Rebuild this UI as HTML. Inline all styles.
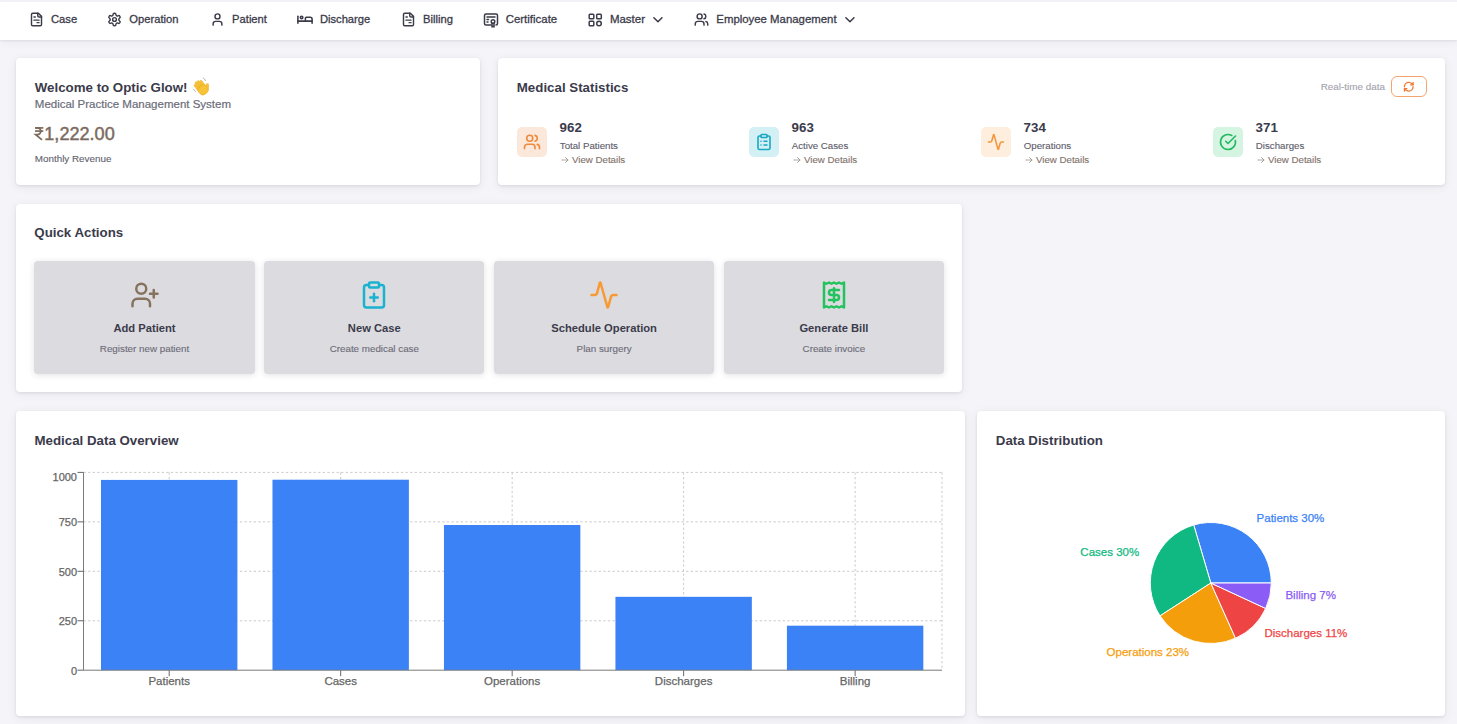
<!DOCTYPE html>
<html><head><meta charset="utf-8"><style>
html,body{margin:0;padding:0;width:1457px;height:724px;overflow:hidden;background:#f5f5f9;font-family:"Liberation Sans", sans-serif;}
.t{position:absolute;white-space:nowrap;line-height:1;}
svg{overflow:visible}
</style></head><body>
<div style="position:absolute;left:0px;top:2px;width:1457px;height:38px;background:#fff;box-shadow:0 1px 2px rgba(30,30,60,0.08),0 2px 8px rgba(30,30,60,0.06);"></div>
<svg style="position:absolute;left:29.1px;top:12.4px;" width="15" height="15" viewBox="0 0 24 24" fill="none"><g stroke="#3b3b4a" stroke-width="2.3" stroke-linecap="round" stroke-linejoin="round"><path d="M15 2H6a2 2 0 0 0-2 2v16a2 2 0 0 0 2 2h12a2 2 0 0 0 2-2V7Z"/><path d="M14 2v4a2 2 0 0 0 2 2h4"/><path d="M8 8h2"/><path d="M8 13h8"/><path d="M13 17h3"/></g></svg>
<div class="t" style="left:51.00px;top:14.32px;font-size:11.2px;font-weight:400;color:#3b3b4a;-webkit-text-stroke:0.3px #3b3b4a;">Case</div>
<svg style="position:absolute;left:107.4px;top:12.4px;" width="15" height="15" viewBox="0 0 24 24" fill="none"><g stroke="#3b3b4a" stroke-width="2.3" stroke-linecap="round" stroke-linejoin="round"><path d="M12.22 2h-.44a2 2 0 0 0-2 2v.18a2 2 0 0 1-1 1.73l-.43.25a2 2 0 0 1-2 0l-.15-.08a2 2 0 0 0-2.73.73l-.22.38a2 2 0 0 0 .73 2.73l.15.1a2 2 0 0 1 1 1.72v.51a2 2 0 0 1-1 1.74l-.15.09a2 2 0 0 0-.73 2.73l.22.38a2 2 0 0 0 2.73.73l.15-.08a2 2 0 0 1 2 0l.43.25a2 2 0 0 1 1 1.73V20a2 2 0 0 0 2 2h.44a2 2 0 0 0 2-2v-.18a2 2 0 0 1 1-1.73l.43-.25a2 2 0 0 1 2 0l.15.08a2 2 0 0 0 2.73-.73l.22-.39a2 2 0 0 0-.73-2.73l-.15-.08a2 2 0 0 1-1-1.74v-.5a2 2 0 0 1 1-1.74l.15-.09a2 2 0 0 0 .73-2.73l-.22-.38a2 2 0 0 0-2.73-.73l-.15.08a2 2 0 0 1-2 0l-.43-.25a2 2 0 0 1-1-1.73V4a2 2 0 0 0-2-2z"/><circle cx="12" cy="12" r="3"/></g></svg>
<div class="t" style="left:129.30px;top:14.32px;font-size:11.2px;font-weight:400;color:#3b3b4a;-webkit-text-stroke:0.3px #3b3b4a;">Operation</div>
<svg style="position:absolute;left:209.6px;top:12.4px;" width="15" height="15" viewBox="0 0 24 24" fill="none"><g stroke="#3b3b4a" stroke-width="2.3" stroke-linecap="round" stroke-linejoin="round"><circle cx="12" cy="7" r="4"/><path d="M19 21v-2a4 4 0 0 0-4-4H9a4 4 0 0 0-4 4v2"/></g></svg>
<div class="t" style="left:232.10px;top:14.32px;font-size:11.2px;font-weight:400;color:#3b3b4a;-webkit-text-stroke:0.3px #3b3b4a;">Patient</div>
<svg style="position:absolute;left:296px;top:14px;" width="18" height="12" viewBox="0 0 18 12" fill="none"><g stroke="#3b3b4a" stroke-width="1.55" stroke-linecap="round" stroke-linejoin="round" fill="none"><path d="M1.9 2.3v6.9"/><path d="M1.9 7.1h14.2v2.1"/><circle cx="5.6" cy="3.5" r="1.25"/><path d="M9.4 7.1V4.2a1 1 0 0 1 1-1h3.7a2 2 0 0 1 2 2v1.9"/></g></svg>
<div class="t" style="left:319.90px;top:14.32px;font-size:11.2px;font-weight:400;color:#3b3b4a;-webkit-text-stroke:0.3px #3b3b4a;">Discharge</div>
<svg style="position:absolute;left:400.6px;top:12.4px;" width="15" height="15" viewBox="0 0 24 24" fill="none"><g stroke="#3b3b4a" stroke-width="2.3" stroke-linecap="round" stroke-linejoin="round"><path d="M15 2H6a2 2 0 0 0-2 2v16a2 2 0 0 0 2 2h12a2 2 0 0 0 2-2V7Z"/><path d="M14 2v4a2 2 0 0 0 2 2h4"/><path d="M8 8h2"/><path d="M8 13h8"/><path d="M13 17h3"/></g></svg>
<div class="t" style="left:423.00px;top:14.32px;font-size:11.2px;font-weight:400;color:#3b3b4a;-webkit-text-stroke:0.3px #3b3b4a;">Billing</div>
<svg style="position:absolute;left:483px;top:13px;" width="17" height="15" viewBox="0 0 17 15" fill="none"><g stroke="#3b3b4a" stroke-width="1.5" stroke-linecap="round" stroke-linejoin="round" fill="none"><path d="M8 12H3a1.5 1.5 0 0 1-1.5-1.5V2.5A1.5 1.5 0 0 1 3 1h10a1.5 1.5 0 0 1 1.5 1.5v8A1.5 1.5 0 0 1 13 12"/><path d="M4 4h8"/><path d="M4 6.5h1.5"/><path d="M4 9h1"/><circle cx="10" cy="8.5" r="1.8"/><path d="M9 10.5v3.5l1-0.8 1 0.8v-3.5"/></g></svg>
<div class="t" style="left:505.70px;top:14.11px;font-size:11.45px;font-weight:400;color:#3b3b4a;-webkit-text-stroke:0.3px #3b3b4a;">Certificate</div>
<svg style="position:absolute;left:588px;top:13px;" width="15" height="14" viewBox="0 0 15 14" fill="none"><g stroke="#3b3b4a" stroke-width="1.5" fill="none"><rect x="1.2" y="1.2" width="4.6" height="4.6" rx="0.8"/><rect x="8.7" y="1.2" width="4.6" height="4.6" rx="0.8"/><rect x="1.2" y="8.2" width="4.6" height="4.6" rx="0.8"/><circle cx="11" cy="10.5" r="2.3"/></g></svg>
<div class="t" style="left:609.90px;top:14.07px;font-size:11.5px;font-weight:400;color:#3b3b4a;-webkit-text-stroke:0.3px #3b3b4a;">Master</div>
<svg style="position:absolute;left:651px;top:14px;" width="13" height="10" viewBox="0 0 13 10" fill="none"><path d="M2.9 3.7l4.05 4.1 4.05-4.1" stroke="#3b3b4a" stroke-width="1.5" fill="none" stroke-linecap="round" stroke-linejoin="round"/></svg>
<svg style="position:absolute;left:693.5px;top:12.2px;" width="15" height="15" viewBox="0 0 24 24" fill="none"><g stroke="#3b3b4a" stroke-width="2.3" stroke-linecap="round" stroke-linejoin="round"><path d="M16 21v-2a4 4 0 0 0-4-4H6a4 4 0 0 0-4 4v2"/><circle cx="9" cy="7" r="4"/><path d="M22 21v-2a4 4 0 0 0-3-3.87"/><path d="M16 3.13a4 4 0 0 1 0 7.75"/></g></svg>
<div class="t" style="left:716.30px;top:14.15px;font-size:11.4px;font-weight:400;color:#3b3b4a;-webkit-text-stroke:0.3px #3b3b4a;">Employee Management</div>
<svg style="position:absolute;left:843px;top:14px;" width="13" height="10" viewBox="0 0 13 10" fill="none"><path d="M2.9 3.7l4.05 4.1 4.05-4.1" stroke="#3b3b4a" stroke-width="1.5" fill="none" stroke-linecap="round" stroke-linejoin="round"/></svg>
<div style="position:absolute;left:16px;top:58px;width:464px;height:127px;background:#fff;border-radius:4px;box-shadow:0 1px 3px rgba(30,30,60,0.09),0 2px 10px rgba(30,30,60,0.08);"></div>
<div class="t" style="left:34.80px;top:80.84px;font-size:13.3px;font-weight:700;color:#3b3b4b;">Welcome to Optic Glow!</div>
<svg style="position:absolute;left:189px;top:75px;" width="24" height="24" viewBox="0 0 24 24" fill="none"><g transform="translate(12.6 13.2) rotate(-38)"><g fill="#f8c336" stroke="#e3a21a" stroke-width="0.35"><rect x="-4.6" y="-7.2" width="2.4" height="9" rx="1.2"/><rect x="-2.2" y="-8.6" width="2.4" height="10" rx="1.2"/><rect x="0.2" y="-8.3" width="2.4" height="10" rx="1.2"/><rect x="2.5" y="-6.8" width="2.3" height="9" rx="1.15"/><rect x="3.2" y="-1.2" width="2.6" height="7" rx="1.3" transform="rotate(40 4.5 3.5)"/><rect x="-4.7" y="-2.5" width="9.6" height="9.5" rx="4"/></g><path d="M-3.6 -2.5v2M-1.2 -3.2v2.2M1.3 -3.2v2.2" stroke="#e3a21a" stroke-width="0.4"/></g><path d="M14.5 3.2c1 .5 1.6 1.3 1.8 2.3" stroke="#a9b0b8" stroke-width="1" stroke-linecap="round" fill="none"/><path d="M4.6 14.2c.3 1 .9 1.8 1.9 2.3" stroke="#a9b0b8" stroke-width="1" stroke-linecap="round" fill="none"/></svg>
<div class="t" style="left:34.80px;top:98.97px;font-size:11.5px;font-weight:400;color:#6c6c79;-webkit-text-stroke:0.2px #6c6c79;">Medical Practice Management System</div>
<svg style="position:absolute;left:34.8px;top:127.3px;" width="8.5" height="13" viewBox="0 0 8.5 13" fill="none"><g stroke="#7b6a5e" stroke-width="1.7" fill="none" stroke-linecap="butt" stroke-linejoin="miter"><path d="M0 0.9h8.3"/><path d="M0 4.1h8.3"/><path d="M0.3 0.9h2.2a3.3 3.3 0 0 1 0 6.6H0.6l6.4 5.3"/></g></svg>
<div class="t" style="left:44.30px;top:125.28px;font-size:18.1px;font-weight:400;color:#7b6a5e;-webkit-text-stroke:0.45px #7b6a5e;">1,222.00</div>
<div class="t" style="left:34.80px;top:154.26px;font-size:9.85px;font-weight:400;color:#62626e;-webkit-text-stroke:0.12px #62626e;">Monthly Revenue</div>
<div style="position:absolute;left:498px;top:58px;width:947px;height:127px;background:#fff;border-radius:4px;box-shadow:0 1px 3px rgba(30,30,60,0.09),0 2px 10px rgba(30,30,60,0.08);"></div>
<div class="t" style="left:516.80px;top:80.94px;font-size:13.3px;font-weight:700;color:#3b3b4b;">Medical Statistics</div>
<div class="t" style="left:1320.70px;top:82.02px;font-size:9.9px;font-weight:400;color:#a3a3ad;-webkit-text-stroke:0.12px #a3a3ad;">Real-time data</div>
<div style="position:absolute;left:1391px;top:76px;width:36px;height:21px;box-sizing:border-box;border:1.5px solid #f4a56f;border-radius:6px;"></div>
<svg style="position:absolute;left:1403.2px;top:80.8px;" width="11.5" height="11.5" viewBox="0 0 24 24" fill="none"><g stroke="#ee7a36" stroke-width="2.8" stroke-linecap="round" stroke-linejoin="round"><path d="M3 12a9 9 0 0 1 9-9 9.75 9.75 0 0 1 6.74 2.74L21 8"/><path d="M21 3v5h-5"/><path d="M21 12a9 9 0 0 1-9 9 9.75 9.75 0 0 1-6.74-2.74L3 16"/><path d="M8 16H3v5"/></g></svg>
<div style="position:absolute;left:517px;top:126.6px;width:30px;height:30px;background:#fce8da;border-radius:5px;"></div>
<svg style="position:absolute;left:523px;top:132.6px;" width="18" height="18" viewBox="0 0 24 24" fill="none"><g stroke="#ef8a3c" stroke-width="2.15" stroke-linecap="round" stroke-linejoin="round"><path d="M16 21v-2a4 4 0 0 0-4-4H6a4 4 0 0 0-4 4v2"/><circle cx="9" cy="7" r="4"/><path d="M22 21v-2a4 4 0 0 0-3-3.87"/><path d="M16 3.13a4 4 0 0 1 0 7.75"/></g></svg>
<div class="t" style="left:559.60px;top:121.14px;font-size:13.3px;font-weight:700;color:#3b3b4b;">962</div>
<div class="t" style="left:559.80px;top:141.39px;font-size:9.7px;font-weight:400;color:#5d5d6a;-webkit-text-stroke:0.12px #5d5d6a;">Total Patients</div>
<svg style="position:absolute;left:560.5px;top:156.3px;" width="8" height="8" viewBox="0 0 8 8" fill="none"><path d="M1 4h6M4.5 1.5 7 4 4.5 6.5" stroke="#9a8f88" stroke-width="0.8" fill="none" stroke-linecap="round" stroke-linejoin="round"/></svg>
<div class="t" style="left:572.00px;top:155.19px;font-size:9.7px;font-weight:400;color:#7f726a;-webkit-text-stroke:0.12px #7f726a;">View Details</div>
<div style="position:absolute;left:749px;top:126.6px;width:30px;height:30px;background:#d3f0f5;border-radius:5px;"></div>
<svg style="position:absolute;left:755px;top:132.6px;" width="18" height="18" viewBox="0 0 24 24" fill="none"><g stroke="#1ba8c4" stroke-width="2.15" stroke-linecap="round" stroke-linejoin="round"><rect width="8" height="4" x="8" y="2" rx="1" ry="1"/><path d="M16 4h2a2 2 0 0 1 2 2v14a2 2 0 0 1-2 2H6a2 2 0 0 1-2-2V6a2 2 0 0 1 2-2h2"/><path d="M12 11h4"/><path d="M12 16h4"/><path d="M8 11h.01"/><path d="M8 16h.01"/></g></svg>
<div class="t" style="left:791.60px;top:121.14px;font-size:13.3px;font-weight:700;color:#3b3b4b;">963</div>
<div class="t" style="left:791.80px;top:141.39px;font-size:9.7px;font-weight:400;color:#5d5d6a;-webkit-text-stroke:0.12px #5d5d6a;">Active Cases</div>
<svg style="position:absolute;left:792.5px;top:156.3px;" width="8" height="8" viewBox="0 0 8 8" fill="none"><path d="M1 4h6M4.5 1.5 7 4 4.5 6.5" stroke="#9a8f88" stroke-width="0.8" fill="none" stroke-linecap="round" stroke-linejoin="round"/></svg>
<div class="t" style="left:804.00px;top:155.19px;font-size:9.7px;font-weight:400;color:#7f726a;-webkit-text-stroke:0.12px #7f726a;">View Details</div>
<div style="position:absolute;left:981px;top:126.6px;width:30px;height:30px;background:#fdeede;border-radius:5px;"></div>
<svg style="position:absolute;left:987px;top:132.6px;" width="18" height="18" viewBox="0 0 24 24" fill="none"><g stroke="#f5943a" stroke-width="2.15" stroke-linecap="round" stroke-linejoin="round"><path d="M22 12h-2.48a2 2 0 0 0-1.93 1.46l-2.35 8.36a.25.25 0 0 1-.48 0L9.24 2.18a.25.25 0 0 0-.48 0l-2.35 8.36A2 2 0 0 1 4.49 12H2"/></g></svg>
<div class="t" style="left:1023.60px;top:121.14px;font-size:13.3px;font-weight:700;color:#3b3b4b;">734</div>
<div class="t" style="left:1023.80px;top:141.39px;font-size:9.7px;font-weight:400;color:#5d5d6a;-webkit-text-stroke:0.12px #5d5d6a;">Operations</div>
<svg style="position:absolute;left:1024.5px;top:156.3px;" width="8" height="8" viewBox="0 0 8 8" fill="none"><path d="M1 4h6M4.5 1.5 7 4 4.5 6.5" stroke="#9a8f88" stroke-width="0.8" fill="none" stroke-linecap="round" stroke-linejoin="round"/></svg>
<div class="t" style="left:1036.00px;top:155.19px;font-size:9.7px;font-weight:400;color:#7f726a;-webkit-text-stroke:0.12px #7f726a;">View Details</div>
<div style="position:absolute;left:1213px;top:126.6px;width:30px;height:30px;background:#d6f4e2;border-radius:5px;"></div>
<svg style="position:absolute;left:1219px;top:132.6px;" width="18" height="18" viewBox="0 0 24 24" fill="none"><g stroke="#25b860" stroke-width="2.15" stroke-linecap="round" stroke-linejoin="round"><path d="M21.801 10A10 10 0 1 1 17 3.335"/><path d="m9 11 3 3L22 4"/></g></svg>
<div class="t" style="left:1255.60px;top:121.14px;font-size:13.3px;font-weight:700;color:#3b3b4b;">371</div>
<div class="t" style="left:1255.80px;top:141.39px;font-size:9.7px;font-weight:400;color:#5d5d6a;-webkit-text-stroke:0.12px #5d5d6a;">Discharges</div>
<svg style="position:absolute;left:1256.5px;top:156.3px;" width="8" height="8" viewBox="0 0 8 8" fill="none"><path d="M1 4h6M4.5 1.5 7 4 4.5 6.5" stroke="#9a8f88" stroke-width="0.8" fill="none" stroke-linecap="round" stroke-linejoin="round"/></svg>
<div class="t" style="left:1268.00px;top:155.19px;font-size:9.7px;font-weight:400;color:#7f726a;-webkit-text-stroke:0.12px #7f726a;">View Details</div>
<div style="position:absolute;left:16px;top:204px;width:946px;height:188px;background:#fff;border-radius:4px;box-shadow:0 1px 3px rgba(30,30,60,0.09),0 2px 10px rgba(30,30,60,0.08);"></div>
<div class="t" style="left:34.30px;top:226.24px;font-size:13.3px;font-weight:700;color:#3b3b4b;">Quick Actions</div>
<div style="position:absolute;left:34.3px;top:261px;width:220.4px;height:112.5px;background:#dcdbe0;border-radius:4px;box-shadow:0 1px 6px rgba(30,30,60,0.13);"></div>
<svg style="position:absolute;left:129.5px;top:279.6px;" width="30" height="30" viewBox="0 0 24 24" fill="none"><g stroke="#85725f" stroke-width="2" stroke-linecap="round" stroke-linejoin="round"><path d="M16 21v-2a4 4 0 0 0-4-4H6a4 4 0 0 0-4 4v2"/><circle cx="9" cy="7" r="4"/><line x1="19" x2="19" y1="8" y2="14"/><line x1="22" x2="16" y1="11" y2="11"/></g></svg>
<div class="t" style="left:-155.50px;width:600px;text-align:center;top:322.82px;font-size:11.2px;font-weight:700;color:#3b3b4b;">Add Patient</div>
<div class="t" style="left:-155.50px;width:600px;text-align:center;top:344.10px;font-size:9.8px;font-weight:400;color:#6c6c78;-webkit-text-stroke:0.12px #6c6c78;">Register new patient</div>
<div style="position:absolute;left:264.1px;top:261px;width:220.4px;height:112.5px;background:#dcdbe0;border-radius:4px;box-shadow:0 1px 6px rgba(30,30,60,0.13);"></div>
<svg style="position:absolute;left:359.3px;top:279.6px;" width="30" height="30" viewBox="0 0 24 24" fill="none"><g stroke="#1ab3cf" stroke-width="2" stroke-linecap="round" stroke-linejoin="round"><rect width="8" height="4" x="8" y="2" rx="1" ry="1"/><path d="M16 4h2a2 2 0 0 1 2 2v14a2 2 0 0 1-2 2H6a2 2 0 0 1-2-2V6a2 2 0 0 1 2-2h2"/><path d="M9 14h6"/><path d="M12 17v-6"/></g></svg>
<div class="t" style="left:74.30px;width:600px;text-align:center;top:322.82px;font-size:11.2px;font-weight:700;color:#3b3b4b;">New Case</div>
<div class="t" style="left:74.30px;width:600px;text-align:center;top:344.10px;font-size:9.8px;font-weight:400;color:#6c6c78;-webkit-text-stroke:0.12px #6c6c78;">Create medical case</div>
<div style="position:absolute;left:493.90000000000003px;top:261px;width:220.4px;height:112.5px;background:#dcdbe0;border-radius:4px;box-shadow:0 1px 6px rgba(30,30,60,0.13);"></div>
<svg style="position:absolute;left:589.1px;top:279.6px;" width="30" height="30" viewBox="0 0 24 24" fill="none"><g stroke="#f89a33" stroke-width="2" stroke-linecap="round" stroke-linejoin="round"><path d="M22 12h-2.48a2 2 0 0 0-1.93 1.46l-2.35 8.36a.25.25 0 0 1-.48 0L9.24 2.18a.25.25 0 0 0-.48 0l-2.35 8.36A2 2 0 0 1 4.49 12H2"/></g></svg>
<div class="t" style="left:304.10px;width:600px;text-align:center;top:322.82px;font-size:11.2px;font-weight:700;color:#3b3b4b;">Schedule Operation</div>
<div class="t" style="left:304.10px;width:600px;text-align:center;top:344.10px;font-size:9.8px;font-weight:400;color:#6c6c78;-webkit-text-stroke:0.12px #6c6c78;">Plan surgery</div>
<div style="position:absolute;left:723.7px;top:261px;width:220.4px;height:112.5px;background:#dcdbe0;border-radius:4px;box-shadow:0 1px 6px rgba(30,30,60,0.13);"></div>
<svg style="position:absolute;left:818.9000000000001px;top:279.6px;" width="30" height="30" viewBox="0 0 24 24" fill="none"><g stroke="#22c35c" stroke-width="2" stroke-linecap="round" stroke-linejoin="round"><path d="M4 2v20l2-1 2 1 2-1 2 1 2-1 2 1 2-1 2 1V2l-2 1-2-1-2 1-2-1-2 1-2-1-2 1Z"/><path d="M16 8h-6a2 2 0 1 0 0 4h4a2 2 0 1 1 0 4H8"/><path d="M12 17.5v-11"/></g></svg>
<div class="t" style="left:533.90px;width:600px;text-align:center;top:322.82px;font-size:11.2px;font-weight:700;color:#3b3b4b;">Generate Bill</div>
<div class="t" style="left:533.90px;width:600px;text-align:center;top:344.10px;font-size:9.8px;font-weight:400;color:#6c6c78;-webkit-text-stroke:0.12px #6c6c78;">Create invoice</div>
<div style="position:absolute;left:16px;top:411px;width:949px;height:304.8px;background:#fff;border-radius:4px;box-shadow:0 1px 3px rgba(30,30,60,0.09),0 2px 10px rgba(30,30,60,0.08);"></div>
<div class="t" style="left:34.50px;top:433.54px;font-size:13.3px;font-weight:700;color:#3b3b4b;">Medical Data Overview</div>
<svg style="position:absolute;left:0;top:0" width="1457" height="724" font-family='"Liberation Sans", sans-serif'><line x1="83.5" x2="942.0" y1="620.75" y2="620.75" stroke="#c4c4c4" stroke-width="0.9" stroke-dasharray="2.3 2.3"/><line x1="83.5" x2="942.0" y1="571.30" y2="571.30" stroke="#c4c4c4" stroke-width="0.9" stroke-dasharray="2.3 2.3"/><line x1="83.5" x2="942.0" y1="521.85" y2="521.85" stroke="#c4c4c4" stroke-width="0.9" stroke-dasharray="2.3 2.3"/><line x1="83.5" x2="942.0" y1="472.40" y2="472.40" stroke="#c4c4c4" stroke-width="0.9" stroke-dasharray="2.3 2.3"/><line x1="169.20" x2="169.20" y1="472.4" y2="670.2" stroke="#c4c4c4" stroke-width="0.9" stroke-dasharray="2.3 2.3"/><line x1="340.68" x2="340.68" y1="472.4" y2="670.2" stroke="#c4c4c4" stroke-width="0.9" stroke-dasharray="2.3 2.3"/><line x1="512.16" x2="512.16" y1="472.4" y2="670.2" stroke="#c4c4c4" stroke-width="0.9" stroke-dasharray="2.3 2.3"/><line x1="683.64" x2="683.64" y1="472.4" y2="670.2" stroke="#c4c4c4" stroke-width="0.9" stroke-dasharray="2.3 2.3"/><line x1="855.12" x2="855.12" y1="472.4" y2="670.2" stroke="#c4c4c4" stroke-width="0.9" stroke-dasharray="2.3 2.3"/><line x1="942.0" x2="942.0" y1="472.4" y2="670.2" stroke="#c4c4c4" stroke-width="0.9" stroke-dasharray="2.3 2.3"/><rect x="101.00" y="479.92" width="136.40" height="190.28" fill="#3b82f6"/><line x1="169.20" x2="169.20" y1="670.2" y2="676.2" stroke="#666"/><text x="169.20" y="684.6" text-anchor="middle" font-size="11.5" fill="#666" stroke="#666" stroke-width="0.25">Patients</text><rect x="272.48" y="479.72" width="136.40" height="190.48" fill="#3b82f6"/><line x1="340.68" x2="340.68" y1="670.2" y2="676.2" stroke="#666"/><text x="340.68" y="684.6" text-anchor="middle" font-size="11.5" fill="#666" stroke="#666" stroke-width="0.25">Cases</text><rect x="443.96" y="525.01" width="136.40" height="145.19" fill="#3b82f6"/><line x1="512.16" x2="512.16" y1="670.2" y2="676.2" stroke="#666"/><text x="512.16" y="684.6" text-anchor="middle" font-size="11.5" fill="#666" stroke="#666" stroke-width="0.25">Operations</text><rect x="615.44" y="596.82" width="136.40" height="73.38" fill="#3b82f6"/><line x1="683.64" x2="683.64" y1="670.2" y2="676.2" stroke="#666"/><text x="683.64" y="684.6" text-anchor="middle" font-size="11.5" fill="#666" stroke="#666" stroke-width="0.25">Discharges</text><rect x="786.92" y="625.70" width="136.40" height="44.50" fill="#3b82f6"/><line x1="855.12" x2="855.12" y1="670.2" y2="676.2" stroke="#666"/><text x="855.12" y="684.6" text-anchor="middle" font-size="11.5" fill="#666" stroke="#666" stroke-width="0.25">Billing</text><line x1="83.5" x2="942.0" y1="670.2" y2="670.2" stroke="#7a7a7a"/><line x1="83.5" x2="83.5" y1="472.4" y2="670.2" stroke="#7a7a7a"/><line x1="77.5" x2="83.5" y1="670.20" y2="670.20" stroke="#666"/><text x="77.0" y="674.50" text-anchor="end" font-size="11" fill="#666" stroke="#666" stroke-width="0.25">0</text><line x1="77.5" x2="83.5" y1="620.75" y2="620.75" stroke="#666"/><text x="77.0" y="625.05" text-anchor="end" font-size="11" fill="#666" stroke="#666" stroke-width="0.25">250</text><line x1="77.5" x2="83.5" y1="571.30" y2="571.30" stroke="#666"/><text x="77.0" y="575.60" text-anchor="end" font-size="11" fill="#666" stroke="#666" stroke-width="0.25">500</text><line x1="77.5" x2="83.5" y1="521.85" y2="521.85" stroke="#666"/><text x="77.0" y="526.15" text-anchor="end" font-size="11" fill="#666" stroke="#666" stroke-width="0.25">750</text><line x1="77.5" x2="83.5" y1="472.40" y2="472.40" stroke="#666"/><text x="77.0" y="480.70" text-anchor="end" font-size="11" fill="#666" stroke="#666" stroke-width="0.25">1000</text></svg>
<div style="position:absolute;left:977px;top:411px;width:468px;height:304.8px;background:#fff;border-radius:4px;box-shadow:0 1px 3px rgba(30,30,60,0.09),0 2px 10px rgba(30,30,60,0.08);"></div>
<div class="t" style="left:995.80px;top:433.54px;font-size:13.3px;font-weight:700;color:#3b3b4b;">Data Distribution</div>
<svg style="position:absolute;left:0;top:0" width="1457" height="724" font-family='"Liberation Sans", sans-serif'><path d="M1210.8,583.0 L1271.30,583.00 A60.5,60.5 0 0 0 1193.72,524.96 Z" fill="#3b82f6" stroke="#fff" stroke-width="1"/><text x="1256.57" y="521.83" text-anchor="start" font-size="11.5" fill="#3b82f6" stroke="#3b82f6" stroke-width="0.25">Patients 30%</text><path d="M1210.8,583.0 L1193.72,524.96 A60.5,60.5 0 0 0 1160.00,615.86 Z" fill="#10b981" stroke="#fff" stroke-width="1"/><text x="1139.17" y="556.43" text-anchor="end" font-size="11.5" fill="#10b981" stroke="#10b981" stroke-width="0.25">Cases 30%</text><path d="M1210.8,583.0 L1160.00,615.86 A60.5,60.5 0 0 0 1235.49,638.23 Z" fill="#f59e0b" stroke="#fff" stroke-width="1"/><text x="1189.09" y="656.25" text-anchor="end" font-size="11.5" fill="#f59e0b" stroke="#f59e0b" stroke-width="0.25">Operations 23%</text><path d="M1210.8,583.0 L1235.49,638.23 A60.5,60.5 0 0 0 1265.68,608.46 Z" fill="#ef4444" stroke="#fff" stroke-width="1"/><text x="1264.44" y="637.40" text-anchor="start" font-size="11.5" fill="#ef4444" stroke="#ef4444" stroke-width="0.25">Discharges 11%</text><path d="M1210.8,583.0 L1265.68,608.46 A60.5,60.5 0 0 0 1271.30,583.00 Z" fill="#8b5cf6" stroke="#fff" stroke-width="1"/><text x="1285.41" y="599.46" text-anchor="start" font-size="11.5" fill="#8b5cf6" stroke="#8b5cf6" stroke-width="0.25">Billing 7%</text></svg>
</body></html>
